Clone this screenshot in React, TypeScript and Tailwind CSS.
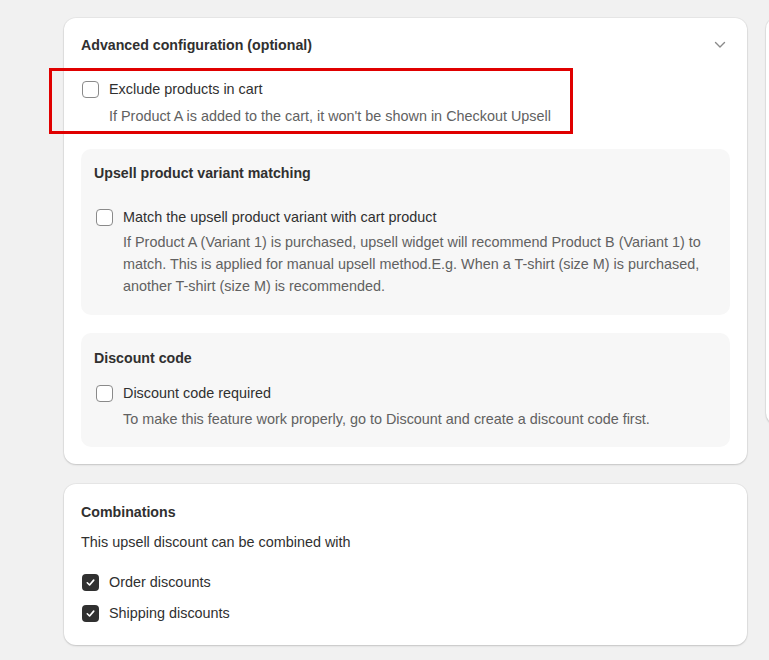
import React from 'react';

const font = { fontFamily: '"Liberation Sans", Arial, sans-serif' };

const Checkbox: React.FC<{ checked?: boolean }> = ({ checked }) =>
    checked ? (
        <span className="flex h-[17px] w-[17px] shrink-0 items-center justify-center rounded-[4px] bg-[#303030]">
            <svg viewBox="0 0 12 12" className="h-[11px] w-[11px]" fill="none" stroke="white" strokeWidth="1.8" strokeLinecap="round" strokeLinejoin="round">
                <path d="M2.5 6.3 5 8.7 9.5 3.4" />
            </svg>
        </span>
    ) : (
        <span className="h-[17px] w-[17px] shrink-0 rounded-[4px] border border-[#8a8a8a] bg-white" />
    );

interface OptionProps {
    label: string;
    description?: React.ReactNode;
    checked?: boolean;
    descClass?: string;
}

const Option: React.FC<OptionProps> = ({ label, description, checked, descClass = 'mt-[5px]' }) => (
    <div>
        <div className="flex h-[22px] items-center gap-[10px] pl-[1px]">
            <Checkbox checked={checked} />
            <span className="text-[14.4px] leading-[22px] text-[#303030]">{label}</span>
        </div>
        {description && (
            <p className={`${descClass} pl-[28px] text-[14.4px] leading-[22px] text-[#616161]`}>{description}</p>
        )}
    </div>
);

const Panel: React.FC<{ title: string; children: React.ReactNode; className?: string }> = ({ title, children, className }) => (
    <div className={`rounded-[10px] bg-[#f7f7f7] px-[13px] ${className ?? ''}`}>
        <h3 className="text-[14.2px] font-bold leading-[22px] text-[#303030]">{title}</h3>
        {children}
    </div>
);

const App: React.FC = () => {
    return (
        <div className="relative h-[660px] w-[769px] overflow-hidden bg-[#f1f1f1]" style={font}>
            <div className="flex items-start gap-[19px] pl-[64px] pt-[18px]">
                <div className="flex w-[683px] shrink-0 flex-col gap-[20px]">
                    {/* Advanced configuration */}
                    <div className="rounded-[12px] bg-white px-[17px] pb-[17px] pt-[16px] shadow-[0_1px_2px_rgba(0,0,0,0.15),0_0_0_1px_rgba(0,0,0,0.04)]">
                        <div className="flex h-[22px] items-center justify-between">
                            <h2 className="text-[14.2px] font-bold leading-[22px] text-[#303030]">Advanced configuration (optional)</h2>
                            <svg viewBox="0 0 12 8" className="mr-[4px] h-[8px] w-[12px]" fill="none" stroke="#8a8a8a" strokeWidth="1.4" strokeLinecap="round" strokeLinejoin="round">
                                <path d="M1.5 1.5 6 6l4.5-4.5" />
                            </svg>
                        </div>
                        <div className="mt-[22px]">
                            <Option
                                label="Exclude products in cart"
                                description="If Product A is added to the cart, it won't be shown in Checkout Upsell"
                            />
                        </div>
                        <Panel title="Upsell product variant matching" className="mt-[22px] pb-[18px] pt-[13px]">
                            <div className="mt-[22px] pl-[1px]">
                                <Option
                                    label="Match the upsell product variant with cart product"
                                    descClass="mt-[3px]"
                                    description="If Product A (Variant 1) is purchased, upsell widget will recommend Product B (Variant 1) to match. This is applied for manual upsell method.E.g. When a T-shirt (size M) is purchased, another T-shirt (size M) is recommended."
                                />
                            </div>
                        </Panel>
                        <Panel title="Discount code" className="mt-[18px] pb-[17px] pt-[14px]">
                            <div className="mt-[13px] pl-[1px]">
                                <Option
                                    label="Discount code required"
                                    descClass="mt-[4px]"
                                    description="To make this feature work properly, go to Discount and create a discount code first."
                                />
                            </div>
                        </Panel>
                    </div>

                    {/* Combinations */}
                    <div className="rounded-[12px] bg-white px-[17px] pb-[21px] pt-[17px] shadow-[0_1px_2px_rgba(0,0,0,0.15),0_0_0_1px_rgba(0,0,0,0.04)]">
                        <h2 className="text-[14.2px] font-bold leading-[22px] text-[#303030]">Combinations</h2>
                        <p className="mt-[8px] text-[14.4px] leading-[22px] text-[#303030]">This upsell discount can be combined with</p>
                        <div className="mt-[18px] flex flex-col gap-[9px]">
                            <Option label="Order discounts" checked />
                            <Option label="Shipping discounts" checked />
                        </div>
                    </div>
                </div>

                {/* side card peeking in */}
                <div className="mt-[-1px] h-[408px] w-[200px] shrink-0 rounded-[12px] bg-white shadow-[0_1px_2px_rgba(0,0,0,0.15),0_0_0_1px_rgba(0,0,0,0.04)]" />
            </div>

            {/* annotation */}
            <div className="pointer-events-none absolute left-[49px] top-[68px] h-[66px] w-[524px] border-[3px] border-[#e00000]" />
        </div>
    );
};

export default App;
